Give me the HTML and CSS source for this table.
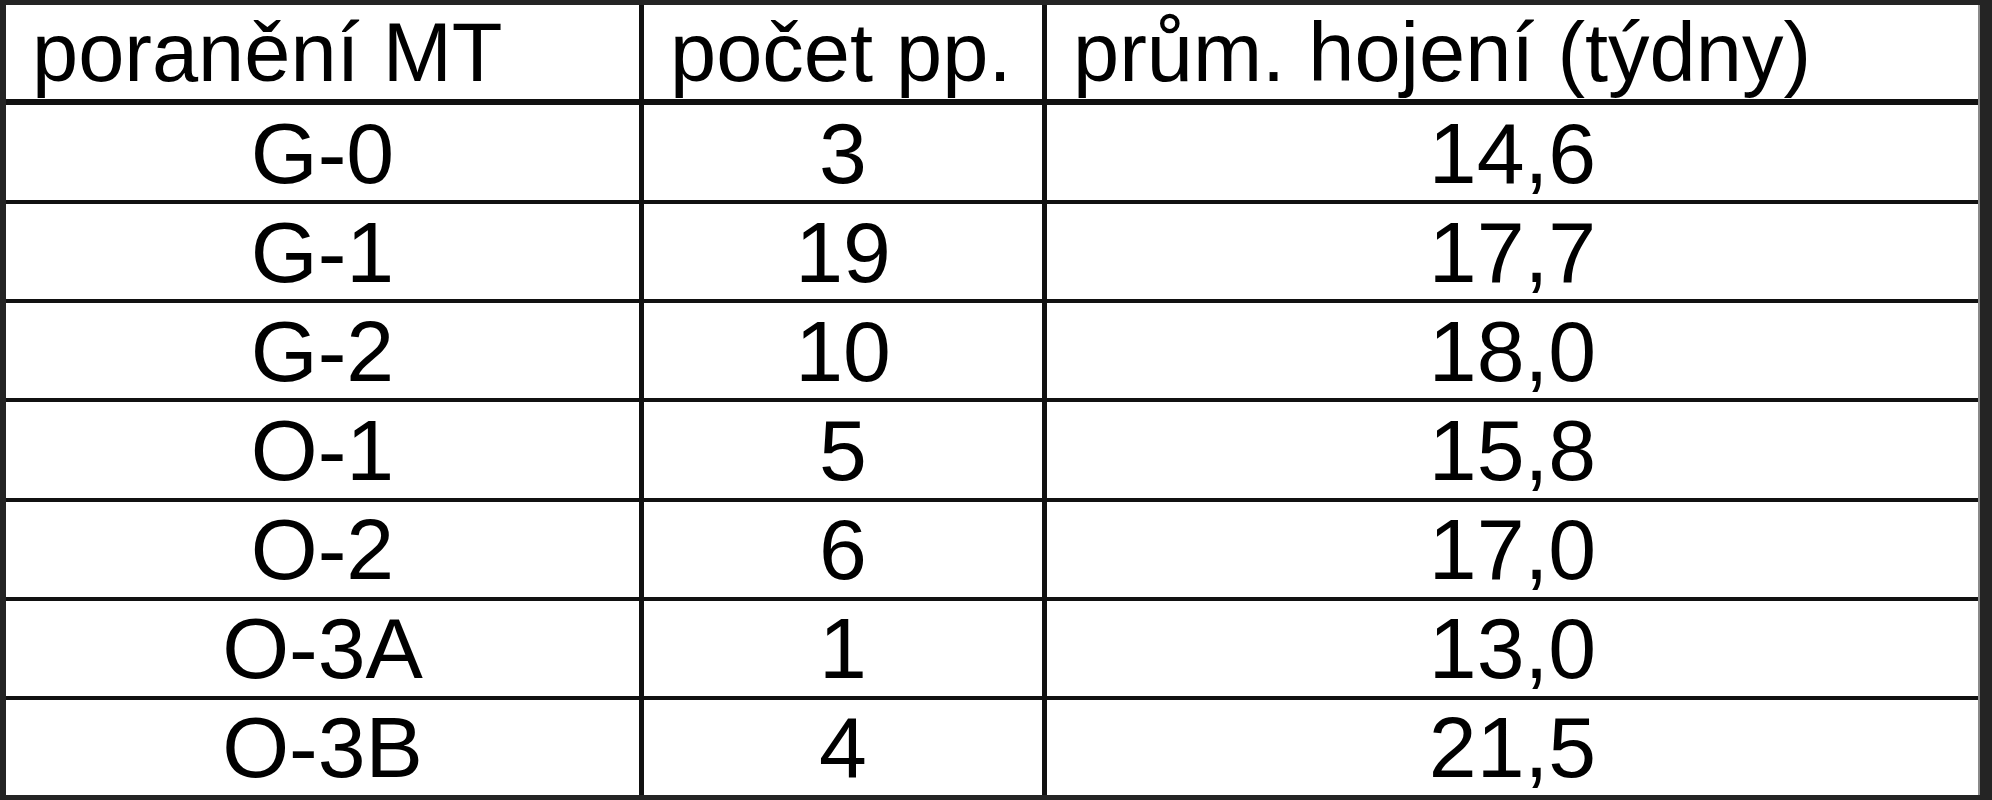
FILE: index.html
```html
<!DOCTYPE html>
<html lang="cs">
<head>
<meta charset="utf-8">
<title>Poranění MT</title>
<link rel="stylesheet" href="styles.css">
</head>
<body>
<div class="sheet">
  <div class="table">
    <div class="cell head">poranění MT</div>
    <div class="cell head">počet pp.</div>
    <div class="cell head">prům. hojení (týdny)</div>

    <div class="cell">G-0</div><div class="cell">3</div><div class="cell">14,6</div>
    <div class="cell">G-1</div><div class="cell">19</div><div class="cell">17,7</div>
    <div class="cell">G-2</div><div class="cell">10</div><div class="cell">18,0</div>
    <div class="cell">O-1</div><div class="cell">5</div><div class="cell">15,8</div>
    <div class="cell">O-2</div><div class="cell">6</div><div class="cell">17,0</div>
    <div class="cell">O-3A</div><div class="cell">1</div><div class="cell">13,0</div>
    <div class="cell">O-3B</div><div class="cell">4</div><div class="cell">21,5</div>
  </div>
</div>
</body>
</html>
```

FILE: styles.css
```css
html, body {
  margin: 0;
  padding: 0;
  background: #242424;
}

.sheet {
  width: 1992px;
  height: 800px;
  box-sizing: border-box;
  padding: 5px 12px 5px 6px;
  background: #242424;
}

.table {
  height: 100%;
  display: grid;
  grid-template-columns: 633px 398px 1fr;
  grid-template-rows: 96px repeat(7, 1fr);
  column-gap: 5px;
  row-gap: 4px;
  background: #111111;
  border-right: 2px solid #8a8a8a;
  font-family: "Liberation Sans", Arial, sans-serif;
  font-size: 86px;
  color: #000000;
}

.cell {
  background: #ffffff;
  display: flex;
  align-items: center;
  justify-content: center;
  line-height: 1;
  white-space: nowrap;
  overflow: hidden;
}

.head {
  justify-content: flex-start;
  padding-left: 26px;
  margin-bottom: 2px;
  font-size: 83px;
}
```
